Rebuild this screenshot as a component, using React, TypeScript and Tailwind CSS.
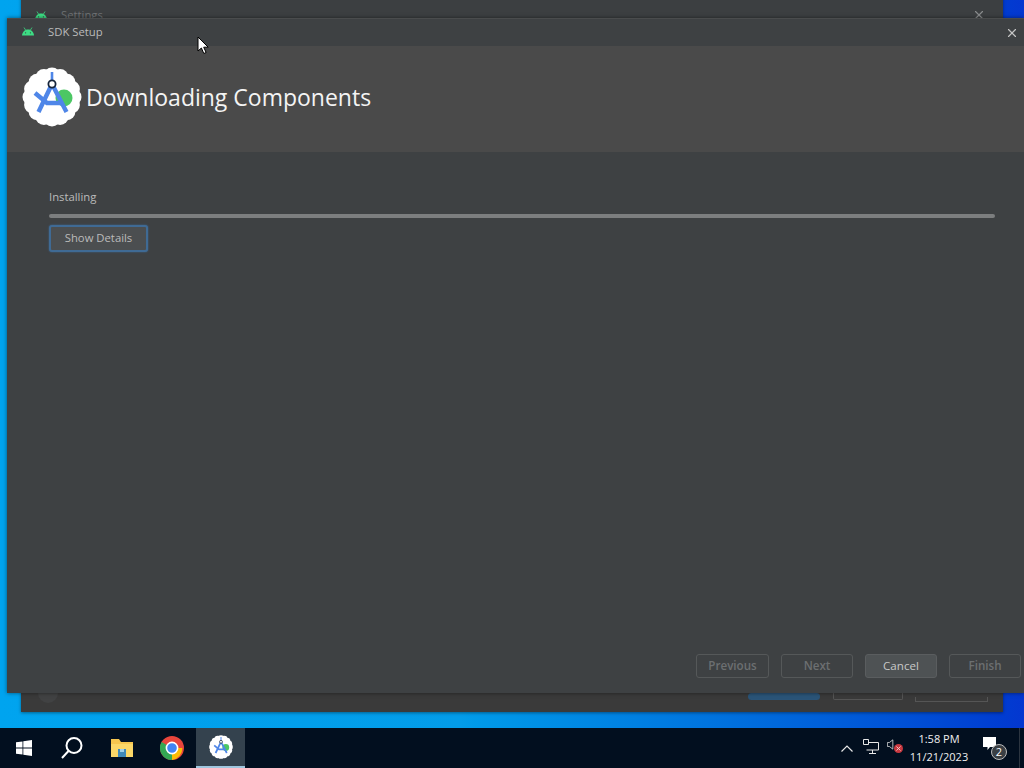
import { X } from "lucide-react";

function AndroidHead({ className }: { className: string }) {
  return (
    <svg viewBox="0 0 14 9" className={className} fill="#3ddc84">
      <path d="M1 8.5C1.2 5 3.600 2.400 7 2.400s5.800 2.600 6 6.100H1z" />
      <path d="M3 .5l1.600 2.600M11 .5L9.400 3.100" stroke="#3ddc84" strokeWidth="0.8" />
      <circle cx="4.600" cy="5.800" r="0.6" fill="#3c3f41" />
      <circle cx="9.400" cy="5.800" r="0.6" fill="#3c3f41" />
    </svg>
  );
}

function StudioLogo({ className }: { className: string }) {
  const petals = Array.from({ length: 16 }, (_, i) => {
    const a = (i / 16) * Math.PI * 2;
    return { cx: 30 + Math.cos(a) * 21, cy: 30 + Math.sin(a) * 21 };
  });
  return (
    <svg viewBox="0 0 60 60" className={className}>
      <circle cx="30" cy="30" r="24" fill="#fff" />
      {petals.map((p, i) => (
        <circle key={i} cx={p.cx} cy={p.cy} r="8.500" fill="#fff" />
      ))}
      <circle cx="42" cy="31" r="8.500" fill="#4cc764" />
      <path d="M30 17L16.500 45M30 17l14.500 28" stroke="#4f86e8" strokeWidth="4.400" fill="none" />
      <path d="M13 26l12 10h15" stroke="#4f86e8" strokeWidth="4.400" fill="none" />
      <path d="M30 5v8" stroke="#4f86e8" strokeWidth="2.600" />
      <circle cx="30" cy="17" r="3.600" fill="#fff" stroke="#16243a" strokeWidth="1.800" />
    </svg>
  );
}

function WizardButton({ label, active }: { label: string; active?: boolean }) {
  return (
    <button
      className={`w-[72px] first:w-[73px] h-6 rounded-[3px] border text-[11.6px] leading-none ${
        active
          ? "bg-[#4e5254] border-[#5a5d5f] text-[#c8c8c8]"
          : "bg-transparent border-[#555859] text-[#6c6f71] font-semibold"
      }`}
    >
      {label}
    </button>
  );
}

export default function App() {
  return (
    <div
      className="relative w-[1024px] h-[768px] overflow-hidden bg-gradient-to-r from-[#00a4ef] via-[#039ce9] via-45% to-[#0437d0]"
      style={{ fontFamily: '"Open Sans", "Noto Sans", sans-serif' }}
    >
      {/* Settings window behind */}
      <div className="absolute left-[21px] top-[-10px] w-[982px] h-[722px] bg-[#3a3a3a] shadow-[0_1px_3px_rgba(0,0,0,0.4)]">
        <div className="flex items-center h-[38px] pt-[12px] pl-[13px] bg-[#3c3f41]">
          <AndroidHead className="w-[14px] h-[9px]" />
          <span className="ml-[13px] text-[11.3px] text-[#6e7173]">Settings</span>
          <X size={14} className="ml-auto mr-[17px] text-[#8a8c8d]" />
        </div>
        <div className="absolute left-[17px] top-[693px] w-[20px] h-[20px] rounded-full bg-[#414243]" />
        <div className="absolute left-[727px] top-[703px] w-[72px] h-[7px] rounded-full bg-[#2a5478]" />
        <div className="absolute left-[812px] top-[700px] w-[70px] h-[10px] border-x border-b border-[#555] rounded-b-[2px]" />
        <div className="absolute left-[894px] top-[707px] w-[73px] h-[5px] border-x border-b border-[#555]" />
      </div>

      {/* SDK Setup window */}
      <div className="absolute left-[7px] top-[18px] w-[1017px] h-[675px] bg-[#3e4143] flex flex-col shadow-[0_0_4px_rgba(0,0,0,0.5)]">
        <div className="flex items-center h-[28px] shrink-0 pl-[14px] border-t border-[#4a4c4d]">
          <AndroidHead className="w-[14px] h-[9px] mb-[2px]" />
          <span className="ml-[13px] text-[11.3px] text-[#bbbbbb]">SDK Setup</span>
          <X size={14} className="ml-auto mr-[5px] text-[#c4c4c4]" />
        </div>
        <div className="flex items-center h-[106px] shrink-0 bg-[#4a4a4a] pl-[15px] pb-[4px]">
          <StudioLogo className="w-[60px] h-[60px] shrink-0" />
          <span className="ml-[4px] text-[23px] text-[#f4f4f4]">Downloading Components</span>
        </div>
        <div className="flex-1 flex flex-col pl-[42px] pr-[29px] pt-[36px]">
          <span className="text-[11.3px] leading-[18px] text-[#bbbbbb]">Installing</span>
          <div className="mt-[8px] h-1 rounded-full bg-[#7c7e7f]" />
          <button className="mt-[7px] w-[99px] h-[27px] rounded-[3px] bg-[#4b4e50] border-2 border-[#3f6a94] shadow-[0_0_2px_#3f6a94] text-[11.3px] text-[#bbbbbb]">
            Show Details
          </button>
          <div className="mt-auto mb-[15px] -mr-[26px] flex justify-end gap-3">
            <WizardButton label="Previous" />
            <WizardButton label="Next" />
            <WizardButton label="Cancel" active />
            <WizardButton label="Finish" />
          </div>
        </div>
      </div>

      {/* Cursor */}
      <svg viewBox="0 0 12 19" className="absolute left-[197px] top-[36px] w-[12px] h-[19px]">
        <path d="M1 1v14l3.400-3 2.400 5.500 2.300-1-2.400-5.300h4.500z" fill="#fff" stroke="#000" strokeWidth="1" />
      </svg>

      {/* Taskbar */}
      <div className="absolute left-0 bottom-0 w-full h-10 bg-[#020f1f] flex items-center text-white">
        <div className="w-12 flex justify-center">
          <svg viewBox="0 0 16 16" className="w-4 h-4" fill="#fff">
            <path d="M0 2.300l6.500-.9v6.200H0zM7.300 1.300L16 0v7.600H7.300zM0 8.400h6.500v6.200L0 13.700zM7.300 8.400H16V16l-8.700-1.300z" />
          </svg>
        </div>
        <div className="w-[48px] flex justify-center">
          <svg viewBox="0 0 24 24" className="w-[24px] h-[24px]" fill="none" stroke="#fff" strokeWidth="2">
            <circle cx="14" cy="9.500" r="7.500" />
            <path d="M8.500 15L2 22" />
          </svg>
        </div>
        <div className="w-[51px] flex justify-center">
          <svg viewBox="0 0 24 20" className="w-[24px] h-[20px]">
            <path d="M1 1h8l2 3h12v15H1z" fill="#f6c64f" />
            <path d="M1 6h22v13H1z" fill="#fbd768" />
            <path d="M8 11h8v8H8z" fill="#3f88b8" />
            <path d="M10 11h4v3h-4z" fill="#9fcfe8" />
          </svg>
        </div>
        <div className="w-[49px] flex justify-center">
          <svg viewBox="0 0 24 24" className="w-[24px] h-[24px]">
            <circle cx="12" cy="12" r="12" fill="#e8453c" />
            <path d="M12 12L1.600 6A12 12 0 0 0 12 24z" fill="#34a853" />
            <path d="M12 12h10.400A12 12 0 0 1 12 24z" fill="#fbbc05" />
            <circle cx="12" cy="12" r="5.600" fill="#4285f4" stroke="#fff" strokeWidth="1.600" />
          </svg>
        </div>
        <div className="w-[49px] h-full bg-[#34424e] border-b-2 border-[#9fc6de] flex justify-center items-center">
          <StudioLogo className="w-6 h-6" />
        </div>
        <div className="ml-auto flex items-center h-full pr-[4px]">
          <svg viewBox="0 0 12 7" className="w-[12px] h-[7px] mr-[10px]" fill="none" stroke="#e8e8e8" strokeWidth="1.200">
            <path d="M.5 6.500L6 1l5.500 5.500" />
          </svg>
          <svg viewBox="0 0 16 15" className="w-4 h-[15px] mr-[8px] mb-[4px]" fill="none" stroke="#e8e8e8" strokeWidth="1">
            <path d="M3.500 3.500H15.500V11H3.500M9.500 11v3M6 14.500h7" />
            <path d="M.5.5h5v5h-5z" fill="#020f1f" />
          </svg>
          <div className="relative w-[16px] h-[15px] mr-[5px] mb-[4px]">
            <svg viewBox="0 0 9 14" className="w-[7px] h-[11px]" fill="none" stroke="#e8e8e8" strokeWidth="1">
              <path d="M.5 4.500h2.500L7.500 1v12L3 9.500H.5z" />
            </svg>
            <div className="absolute left-[7px] top-[5px] w-[9px] h-[9px] rounded-full bg-[#c8383f] flex items-center justify-center">
              <X size={7} strokeWidth={3} className="text-[#f3d5d5]" />
            </div>
          </div>
          <div className="w-[62px] flex flex-col items-center text-[11px] leading-[18px] text-[#f0f0f0]">
            <span>1:58 PM</span>
            <span>11/21/2023</span>
          </div>
          <div className="relative w-[24px] h-[22px] ml-[13px] mr-[12px]">
            <svg viewBox="0 0 13 13" className="w-[13px] h-[13px]" fill="#fff">
              <path d="M0 0h13v10H7l-2.500 3v-3H0z" />
            </svg>
            <div className="absolute left-[8px] top-[7px] w-4 h-4 rounded-full bg-[#3a3f44] border border-[#bcbcbc] text-[11px] leading-[14px] text-center text-white">
              2
            </div>
          </div>
          <div className="w-px h-full bg-[#2c3540]" />
        </div>
      </div>
    </div>
  );
}
